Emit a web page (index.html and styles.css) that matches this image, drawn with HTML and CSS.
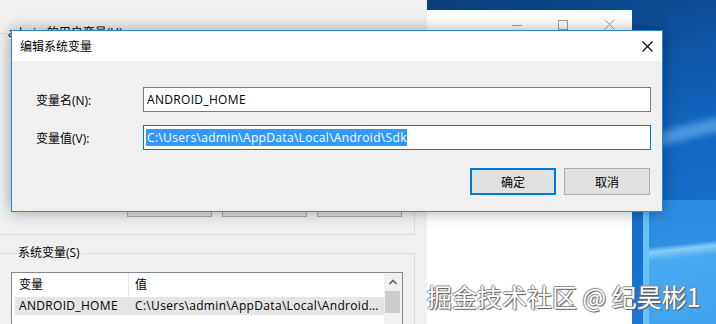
FILE: index.html
```html
<!DOCTYPE html>
<html lang="zh-CN">
<head>
    <meta charset="UTF-8">
    <meta name="viewport" content="width=device-width, initial-scale=1.0">
    <title>编辑系统变量</title>
    <link rel="stylesheet" href="styles.css">
</head>
<body>
    <div class="desktop">
        <div class="light-beam"></div>
        <div class="light-strip"></div>
        <div class="light-pane"></div>

        <!-- 뒤에 있는 흰 창 -->
        <div class="app-window">
            <div class="caption-buttons">
                <span class="cap-btn">
                    <svg width="10" height="10" viewBox="0 0 10 10"><path d="M0 5.5h10" stroke="#a0a0a0" stroke-width="1"/></svg>
                </span>
                <span class="cap-btn">
                    <svg width="10" height="10" viewBox="0 0 10 10"><rect x="0.5" y="0.5" width="9" height="9" fill="none" stroke="#a0a0a0" stroke-width="1"/></svg>
                </span>
                <span class="cap-btn">
                    <svg width="11" height="11" viewBox="0 0 11 11"><path d="M0.5 0.5l10 10M10.5 0.5l-10 10" stroke="#a0a0a0" stroke-width="1"/></svg>
                </span>
            </div>
        </div>

        <!-- 환경 변수 창 -->
        <div class="env-window">
            <fieldset class="group user-group">
                <legend>admin 的用户变量(U)</legend>
                <div class="group-buttons">
                    <button class="btn small">新建(N)...</button>
                    <button class="btn small">编辑(E)...</button>
                    <button class="btn small">删除(D)</button>
                </div>
            </fieldset>
            <fieldset class="group sys-group">
                <legend>系统变量(S)</legend>
                <div class="list">
                    <div class="list-main">
                        <div class="list-head">
                            <div class="col-name">变量</div>
                            <div class="col-value">值</div>
                        </div>
                        <div class="list-row">
                            <div class="col-name">ANDROID_HOME</div>
                            <div class="col-value">C:\Users\admin\AppData\Local\Android\Sdk</div>
                        </div>
                    </div>
                    <div class="scrollbar">
                        <svg class="arrow" width="18" height="17" viewBox="0 0 18 17"><path d="M5.5 11l3.5-3.5 3.5 3.5" fill="none" stroke="#606060" stroke-width="1.6"/></svg>
                        <div class="thumb"></div>
                    </div>
                </div>
            </fieldset>
        </div>

        <!-- 편집 대화상자 -->
        <div class="dialog">
            <div class="dialog-title">
                <span>编辑系统变量</span>
                <svg width="11" height="11" viewBox="0 0 11 11"><path d="M0.5 0.5l10 10M10.5 0.5l-10 10" stroke="#000" stroke-width="1.1"/></svg>
            </div>
            <div class="dialog-body">
                <div class="field">
                    <label>变量名(N):</label>
                    <div class="textbox">ANDROID_HOME</div>
                </div>
                <div class="field">
                    <label>变量值(V):</label>
                    <div class="textbox focused"><span class="selection">C:\Users\admin\AppData\Local\Android\Sdk</span></div>
                </div>
                <div class="dialog-buttons">
                    <button class="btn default">确定</button>
                    <button class="btn">取消</button>
                </div>
            </div>
        </div>

        <div class="watermark">掘金技术社区 @ 纪昊彬1</div>
    </div>
</body>
</html>
```

FILE: styles.css
```css
* {
    margin: 0;
    padding: 0;
    box-sizing: border-box;
}

body {
    font-family: "Open Sans", "Noto Sans CJK SC", sans-serif;
    font-size: 12px;
    color: #000;
}

.desktop {
    position: relative;
    width: 716px;
    height: 324px;
    overflow: hidden;
    background: linear-gradient(165deg, #05264f 0%, #0a4688 30%, #1265c0 60%, #1c7ad6 100%);
}

/* 바탕화면 빛 */
.light-beam {
    position: absolute;
    left: 640px;
    top: 122px;
    width: 120px;
    height: 14px;
    background: rgba(120, 190, 245, 0.55);
    transform: rotate(-14deg);
    filter: blur(3px);
}

.light-strip {
    position: absolute;
    left: 643px;
    top: 200px;
    width: 6px;
    height: 124px;
    background: #6cc2f6;
}

.light-pane {
    position: absolute;
    left: 649px;
    top: 200px;
    width: 67px;
    height: 124px;
    background: linear-gradient(174deg, #2a8ae0 0%, #2f90e2 36%, #86cdf7 40%, #48aaef 47%, #40a4ee 100%);
}

.app-window {
    position: absolute;
    left: 427px;
    top: 10px;
    width: 205px;
    height: 314px;
    background: #fff;
}

.caption-buttons {
    display: flex;
    justify-content: flex-end;
}

.cap-btn {
    width: 46px;
    height: 29px;
    display: flex;
    align-items: center;
    justify-content: center;
}

.env-window {
    position: absolute;
    left: 0;
    top: 0;
    width: 427px;
    height: 324px;
    background: #f0f0f0;
}

.group {
    width: 415px;
    border: 1px solid #dcdcdc;
    border-left: none;
}

.group legend {
    line-height: 16px;
    padding: 0 2px 0 1px;
}

.user-group {
    margin-top: 25px;
    height: 210px;
}

.user-group legend {
    margin-left: 7px;
}

.group-buttons {
    display: flex;
    justify-content: flex-end;
    gap: 10px;
    margin-top: 149px;
    padding-right: 12px;
}

.sys-group {
    margin-top: 10px;
    height: 100px;
    border-bottom: none;
    padding: 11px 0 0 11px;
}

.sys-group legend {
    margin-left: 6px;
}

.list {
    width: 392px;
    height: 70px;
    border: 1px solid #828790;
    background: #fff;
    display: flex;
}

.list-main {
    flex: 1;
    min-width: 0;
}

.list-head {
    display: flex;
    height: 24px;
    line-height: 24px;
}

.list-head .col-name {
    width: 117px;
    padding-left: 7px;
    border-right: 1px solid #e5e5e5;
}

.list-head .col-value {
    padding-left: 6px;
}

.list-row {
    display: flex;
    height: 18px;
    line-height: 18px;
    margin-left: 3px;
    background: #e5e5e5;
    letter-spacing: 0.32px;
}

.list-row .col-name {
    width: 113px;
    padding-left: 4px;
    flex-shrink: 0;
}

.list-row .col-value {
    flex: 1;
    min-width: 0;
    padding-left: 7px;
    padding-right: 3px;
    white-space: nowrap;
    overflow: hidden;
    text-overflow: ellipsis;
}

.scrollbar {
    width: 18px;
    background: #f0f0f0;
}

.arrow {
    display: block;
}

.thumb {
    width: 15px;
    height: 22px;
    margin: 1px 0 0 1px;
    background: #cdcdcd;
}

/* 버튼 */
.btn {
    width: 86px;
    height: 27px;
    background: #e1e1e1;
    border: 1px solid #adadad;
    font: inherit;
    color: #000;
}

.btn.small {
    width: 85px;
}

.btn.default {
    border: 2px solid #0078d7;
}

/* 대화상자 */
.dialog {
    position: absolute;
    left: 11px;
    top: 30px;
    width: 652px;
    height: 182px;
    border: 1px solid #2b88d8;
    background: #f0f0f0;
    box-shadow: 0 0 14px rgba(0, 0, 0, 0.35);
    display: flex;
    flex-direction: column;
}

.dialog-title {
    height: 30px;
    background: #fff;
    display: flex;
    align-items: center;
    justify-content: space-between;
    padding: 0 9px 0 8px;
}

.dialog-body {
    flex: 1;
    padding: 26px 11px 16px 12px;
    display: flex;
    flex-direction: column;
}

.field {
    display: grid;
    grid-template-columns: 119px 1fr;
    align-items: center;
    height: 25px;
}

.field + .field {
    margin-top: 13px;
}

.field label {
    padding-left: 12px;
}

.textbox {
    height: 25px;
    border: 1px solid #7a7a7a;
    background: #fff;
    padding-left: 3px;
    display: flex;
    align-items: center;
    white-space: nowrap;
    letter-spacing: 0.32px;
}

.textbox.focused {
    border-color: #0078d7;
    padding-left: 2px;
}

.selection {
    background: #3399ff;
    color: #fff;
    line-height: 17px;
    padding-left: 1px;
}

.dialog-buttons {
    display: flex;
    justify-content: flex-end;
    gap: 8px;
    margin-top: 18px;
    padding-right: 1px;
}

.watermark {
    position: absolute;
    left: 427px;
    top: 281px;
    font-family: "Noto Sans CJK SC", sans-serif;
    font-size: 25px;
    line-height: 30px;
    color: #fff;
    white-space: nowrap;
    text-shadow: 1px 1px 1px #555, -1px 0 1px #888, 0 -1px 1px #888;
}
```
